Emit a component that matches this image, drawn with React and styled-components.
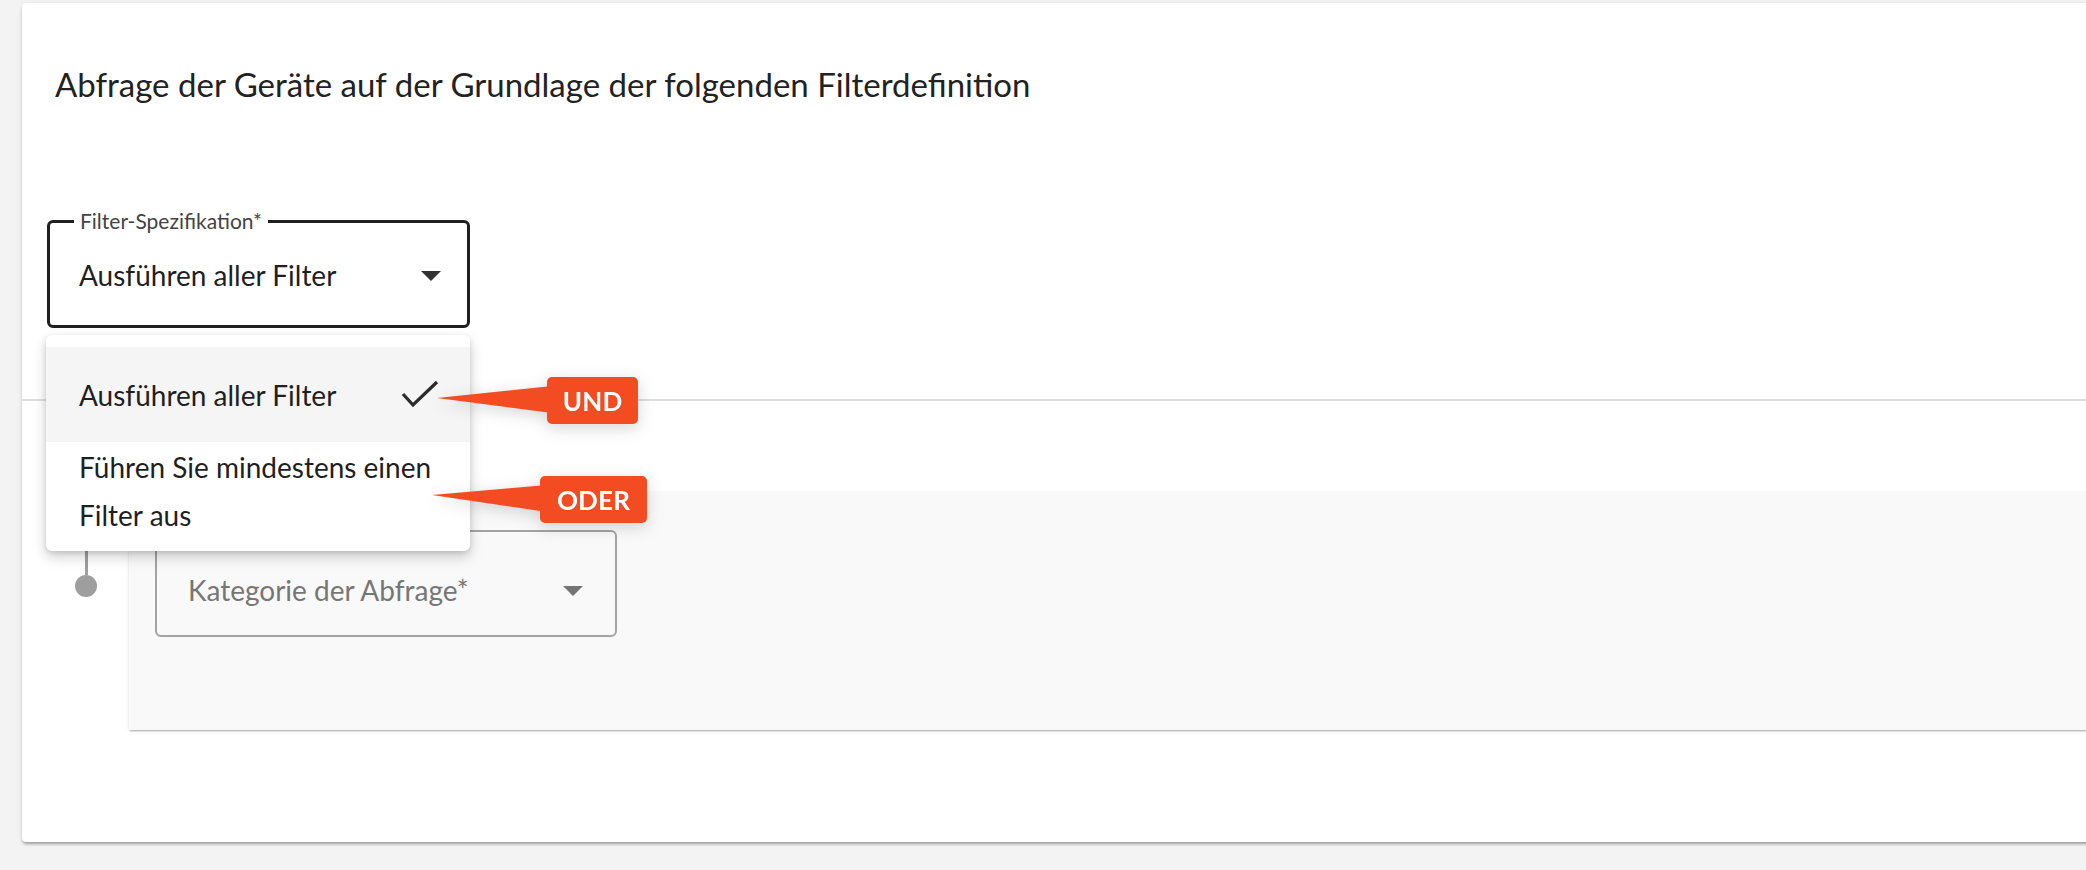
import React from "react";
import styled, { createGlobalStyle } from "styled-components";

const GlobalStyle = createGlobalStyle`
  html, body {
    margin: 0;
    padding: 0;
    background: #f3f3f3;
    overflow: hidden;
    font-family: "Lato", "Noto Sans", sans-serif;
    color: #212121;
  }
`;

const Page = styled.div`
  padding: 3px 0 0 22px;
  min-height: 870px;
  box-sizing: border-box;
`;

const Card = styled.section`
  position: relative;
  background: #fff;
  height: 839px;
  margin-right: -40px;
  border-radius: 4px 0 0 4px;
  box-shadow: 0 3px 3px -1px rgba(0, 0, 0, 0.3), 0 1px 5px rgba(0, 0, 0, 0.1);
  display: flex;
  flex-direction: column;
`;

const Title = styled.h1`
  margin: 61px 0 0 33px;
  font-size: 33px;
  line-height: 40px;
  font-weight: 400;
  color: #222;
`;

const SelectWrap = styled.div`
  position: relative;
  margin: 116px 0 0 25px;
  width: 423px;
`;

const SelectBox = styled.div`
  position: relative;
  box-sizing: border-box;
  height: ${(p) => p.$height}px;
  width: 100%;
  display: flex;
  align-items: center;
  justify-content: space-between;
  padding: ${(p) => p.$pad};
  border: ${(p) => (p.$focused ? "3px solid #1f1f1f" : "2px solid #a3a3a3")};
  border-radius: 6px;
  background: ${(p) => (p.$focused ? "#fff" : "transparent")};
`;

const FloatLabel = styled.span`
  position: absolute;
  top: -14px;
  left: 24px;
  padding: 0 6px;
  background: #fff;
  font-size: 21px;
  line-height: 24px;
  color: #444;
`;

const Value = styled.span`
  font-size: 28px;
  line-height: 34px;
  color: ${(p) => (p.$placeholder ? "#767676" : "#1f1f1f")};
`;

const Arrow = styled.svg`
  width: 48px;
  height: 48px;
  flex: none;
  fill: ${(p) => p.$color};
`;

const Menu = styled.ul`
  position: absolute;
  z-index: 5;
  top: 115px;
  left: -1px;
  width: 424px;
  margin: 0;
  padding: 12px 0;
  list-style: none;
  background: #fff;
  border-radius: 6px;
  box-shadow: 0 6px 14px rgba(0, 0, 0, 0.18), 0 2px 5px rgba(0, 0, 0, 0.12);
`;

const MenuItem = styled.li`
  display: flex;
  align-items: center;
  justify-content: space-between;
  box-sizing: border-box;
  min-height: ${(p) => (p.$selected ? "95px" : "auto")};
  padding: ${(p) => (p.$selected ? "0 31px 0 33px" : "1px 31px 0 33px")};
  background: ${(p) => (p.$selected ? "#f5f5f5" : "#fff")};
  font-size: 28px;
  line-height: ${(p) => (p.$selected ? "34px" : "48px")};
  color: #1f1f1f;
`;

const Check = styled.svg`
  width: 38px;
  height: 28px;
  margin-top: -2px;
  flex: none;
`;

const Divider = styled.hr`
  margin: 71px 0 0 0;
  border: none;
  height: 2px;
  background: #dedede;
`;

const FilterRow = styled.div`
  display: flex;
  margin-top: 91px;
`;

const Timeline = styled.div`
  width: 107px;
  flex: none;
  display: flex;
  flex-direction: column;
  align-items: center;
  padding-left: 21px;
  box-sizing: border-box;
`;

const TimelineLine = styled.div`
  width: 3px;
  height: 63px;
  margin-top: 20px;
  background: #9e9e9e;
`;

const TimelineDot = styled.div`
  width: 22px;
  height: 22px;
  border-radius: 50%;
  background: #9e9e9e;
`;

const Panel = styled.div`
  flex: 1;
  height: 238px;
  box-sizing: border-box;
  padding: 38px 0 0 26px;
  background: #f9f9f9;
  box-shadow: 0 2px 2px -1px rgba(0, 0, 0, 0.35), -1px 0 3px rgba(0, 0, 0, 0.06);
`;

const CategoryWrap = styled.div`
  width: 462px;
`;

const Callout = styled.div`
  position: absolute;
  z-index: 6;
  left: ${(p) => p.$x}px;
  top: ${(p) => p.$y}px;
  width: ${(p) => p.$w}px;
  height: 47px;
  display: flex;
  justify-content: flex-end;
  filter: drop-shadow(0 4px 8px rgba(0, 0, 0, 0.16));
`;

const Pointer = styled.svg`
  position: absolute;
  left: 0;
  top: 0;
  width: 120px;
  height: 47px;
  fill: #f34b22;
`;

const Badge = styled.span`
  position: relative;
  display: flex;
  align-items: center;
  justify-content: center;
  width: ${(p) => p.$w}px;
  height: 100%;
  border-radius: 5px;
  background: #f34b22;
  color: #fff;
  font-size: 26px;
  font-weight: 700;
  letter-spacing: 0.2px;
`;

const DropArrow = ({ color }) => (
  <Arrow viewBox="0 0 24 24" $color={color}>
    <path d="M7 10l5 5 5-5z" />
  </Arrow>
);

const Pointed = ({ x, y, w, badge, tipY, children }) => (
  <Callout $x={x} $y={y} $w={w}>
    <Pointer viewBox="0 0 120 47">
      <polygon points={`0,${tipY} 115,9 115,36`} />
    </Pointer>
    <Badge $w={badge}>{children}</Badge>
  </Callout>
);

export default function App() {
  return (
    <>
      <GlobalStyle />
      <Page>
        <Card>
          <Title>Abfrage der Geräte auf der Grundlage der folgenden Filterdefinition</Title>

          <SelectWrap>
            <SelectBox $focused $height={108} $pad="2px 12px 0 29px">
              <FloatLabel>Filter-Spezifikation*</FloatLabel>
              <Value>Ausführen aller Filter</Value>
              <DropArrow color="#333" />
            </SelectBox>
            <Menu>
              <MenuItem $selected>
                <span>Ausführen aller Filter</span>
                <Check viewBox="0 0 38 28">
                  <polyline
                    points="2,14 12,25 36,2"
                    fill="none"
                    stroke="#2b2b2b"
                    strokeWidth="3.2"
                  />
                </Check>
              </MenuItem>
              <MenuItem>
                <span>
                  Führen Sie mindestens einen
                  <br />
                  Filter aus
                </span>
              </MenuItem>
            </Menu>
          </SelectWrap>

          <Divider />

          <FilterRow>
            <Timeline>
              <TimelineLine />
              <TimelineDot />
            </Timeline>
            <Panel>
              <CategoryWrap>
                <SelectBox $height={107} $pad="12px 18px 0 31px">
                  <Value $placeholder>Kategorie der Abfrage*</Value>
                  <DropArrow color="#757575" />
                </SelectBox>
              </CategoryWrap>
            </Panel>
          </FilterRow>

          <Pointed x={415} y={374} w={201} badge={91} tipY={21}>
            UND
          </Pointed>
          <Pointed x={410} y={473} w={215} badge={107} tipY={19}>
            ODER
          </Pointed>
        </Card>
      </Page>
    </>
  );
}
